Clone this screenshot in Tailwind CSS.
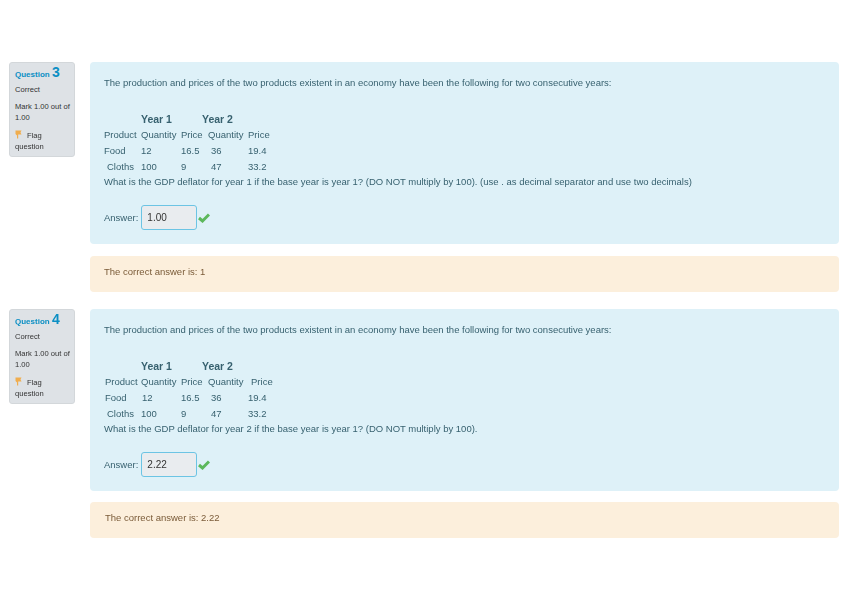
<!DOCTYPE html>
<html lang="en">
<head>
    <meta charset="UTF-8">
    <title>Quiz review</title>
    <script src="https://cdn.jsdelivr.net/npm/@tailwindcss/browser@4"></script>
</head>
<body class="bg-white font-['Liberation_Sans',sans-serif] text-[#333]">
    <div class="pt-[62px] pl-[9px] pr-[9px] blur-[0.35px]">

        <!-- question 3 -->
        <div class="flex items-start gap-[15px] mb-[17px]">
            <div class="w-[66px] shrink-0 h-[95px] bg-[#dee2e6] border border-[#d3d7da] rounded-[3px] pt-[2px] pl-[5px] pr-[2px] text-[7.600px] leading-[11px] text-[#333]">
                <h3 class="font-bold text-[#0b8fc4] h-[14px] leading-[14px] text-[8px]">Question <span class="text-[14px]">3</span></h3>
                <div class="mt-[5px]">Correct</div>
                <div class="mt-[6px]">Mark 1.00 out of 1.00</div>
                <div class="mt-[7px] flex flex-wrap">
                    <svg class="w-[7px] h-[9px] mr-[5px]" viewBox="0 0 7 9"><path d="M0.500 0.500h6L5.500 2.500 6.500 4.500H3.200V8.500H2V5.500L0.500 4z" fill="#f0ad4e"/></svg>
                    <span>Flag</span><span class="w-full">question</span>
                </div>
            </div>
            <div class="flex-1">
                <div class="bg-[#def1f8] rounded-[4px] h-[182px] pl-[14px] pt-[13px] text-[9.500px] leading-[15px] text-[#37616f]">
                    <p>The production and prices of the two products existent in an economy have been the following for two consecutive years:</p>
                    <table class="mt-[22px] table-fixed w-[172px] border-separate border-spacing-0">
                        <colgroup><col class="w-[37px]"><col class="w-[40px]"><col class="w-[27px]"><col class="w-[40px]"><col class="w-[28px]"></colgroup>
                        <tbody>
                            <tr class="h-[14px] leading-[13px] font-bold text-[10.500px]"><td></td><td colspan="2">Year 1</td><td colspan="2"><span class="-ml-[6px]">Year 2</span></td></tr>
                            <tr class="h-[16px]"><td>Product</td><td>Quantity</td><td>Price</td><td>Quantity</td><td>Price</td></tr>
                            <tr class="h-[16px]"><td>Food</td><td>12</td><td>16.5</td><td class="pl-[3px]">36</td><td>19.4</td></tr>
                            <tr class="h-[16px]"><td class="pl-[3px]">Cloths</td><td>100</td><td>9</td><td class="pl-[3px]">47</td><td>33.2</td></tr>
                        </tbody>
                    </table>
                    <p>What is the GDP deflator for year 1 if the base year is year 1? (DO NOT multiply by 100). (use . as decimal separator and use two decimals)</p>
                    <div class="mt-[16px] flex items-center">
                        <span class="mr-[3px]">Answer:</span>
                        <div class="w-[56px] h-[25px] bg-[#e9ecef] border border-[#6cc4e4] rounded-[3px] pl-[5px] leading-[23px] text-[10px] text-[#333]">1.00</div>
                        <svg class="w-[12px] h-[10px] ml-[1px]" viewBox="0 0 12 10"><path d="M1 5 4.500 8 11 1.500" fill="none" stroke="#5cb85c" stroke-width="3"/></svg>
                    </div>
                </div>
                <div class="mt-[12px] bg-[#fcefdc] rounded-[4px] h-[36px] pl-[14px] leading-[31px] text-[9.500px] text-[#7a5b38]">The correct answer is: 1</div>
            </div>
        </div>

        <!-- question 4 -->
        <div class="flex items-start gap-[15px]">
            <div class="w-[66px] shrink-0 h-[95px] bg-[#dee2e6] border border-[#d3d7da] rounded-[3px] pt-[2px] pl-[5px] pr-[2px] text-[7.600px] leading-[11px] text-[#333]">
                <h3 class="font-bold text-[#0b8fc4] h-[14px] leading-[14px] text-[8px]">Question <span class="text-[14px]">4</span></h3>
                <div class="mt-[5px]">Correct</div>
                <div class="mt-[6px]">Mark 1.00 out of 1.00</div>
                <div class="mt-[7px] flex flex-wrap">
                    <svg class="w-[7px] h-[9px] mr-[5px]" viewBox="0 0 7 9"><path d="M0.500 0.500h6L5.500 2.500 6.500 4.500H3.200V8.500H2V5.500L0.500 4z" fill="#f0ad4e"/></svg>
                    <span>Flag</span><span class="w-full">question</span>
                </div>
            </div>
            <div class="flex-1">
                <div class="bg-[#def1f8] rounded-[4px] h-[182px] pl-[14px] pt-[13px] text-[9.500px] leading-[15px] text-[#37616f]">
                    <p>The production and prices of the two products existent in an economy have been the following for two consecutive years:</p>
                    <table class="mt-[22px] table-fixed w-[172px] border-separate border-spacing-0">
                        <colgroup><col class="w-[37px]"><col class="w-[40px]"><col class="w-[27px]"><col class="w-[40px]"><col class="w-[28px]"></colgroup>
                        <tbody>
                            <tr class="h-[14px] leading-[13px] font-bold text-[10.500px]"><td></td><td colspan="2">Year 1</td><td colspan="2"><span class="-ml-[6px]">Year 2</span></td></tr>
                            <tr class="h-[16px]"><td class="pl-[1px]">Product</td><td>Quantity</td><td>Price</td><td>Quantity</td><td class="pl-[3px]">Price</td></tr>
                            <tr class="h-[16px]"><td class="pl-[1px]">Food</td><td class="pl-[1px]">12</td><td>16.5</td><td class="pl-[3px]">36</td><td>19.4</td></tr>
                            <tr class="h-[16px]"><td class="pl-[3px]">Cloths</td><td>100</td><td>9</td><td class="pl-[3px]">47</td><td>33.2</td></tr>
                        </tbody>
                    </table>
                    <p>What is the GDP deflator for year 2 if the base year is year 1? (DO NOT multiply by 100).</p>
                    <div class="mt-[16px] flex items-center">
                        <span class="mr-[3px]">Answer:</span>
                        <div class="w-[56px] h-[25px] bg-[#e9ecef] border border-[#6cc4e4] rounded-[3px] pl-[5px] leading-[23px] text-[10px] text-[#333]">2.22</div>
                        <svg class="w-[12px] h-[10px] ml-[1px]" viewBox="0 0 12 10"><path d="M1 5 4.500 8 11 1.500" fill="none" stroke="#5cb85c" stroke-width="3"/></svg>
                    </div>
                </div>
                <div class="mt-[11px] bg-[#fcefdc] rounded-[4px] h-[36px] pl-[15px] leading-[31px] text-[9.500px] text-[#7a5b38]">The correct answer is: 2.22</div>
            </div>
        </div>

    </div>
</body>
</html>
